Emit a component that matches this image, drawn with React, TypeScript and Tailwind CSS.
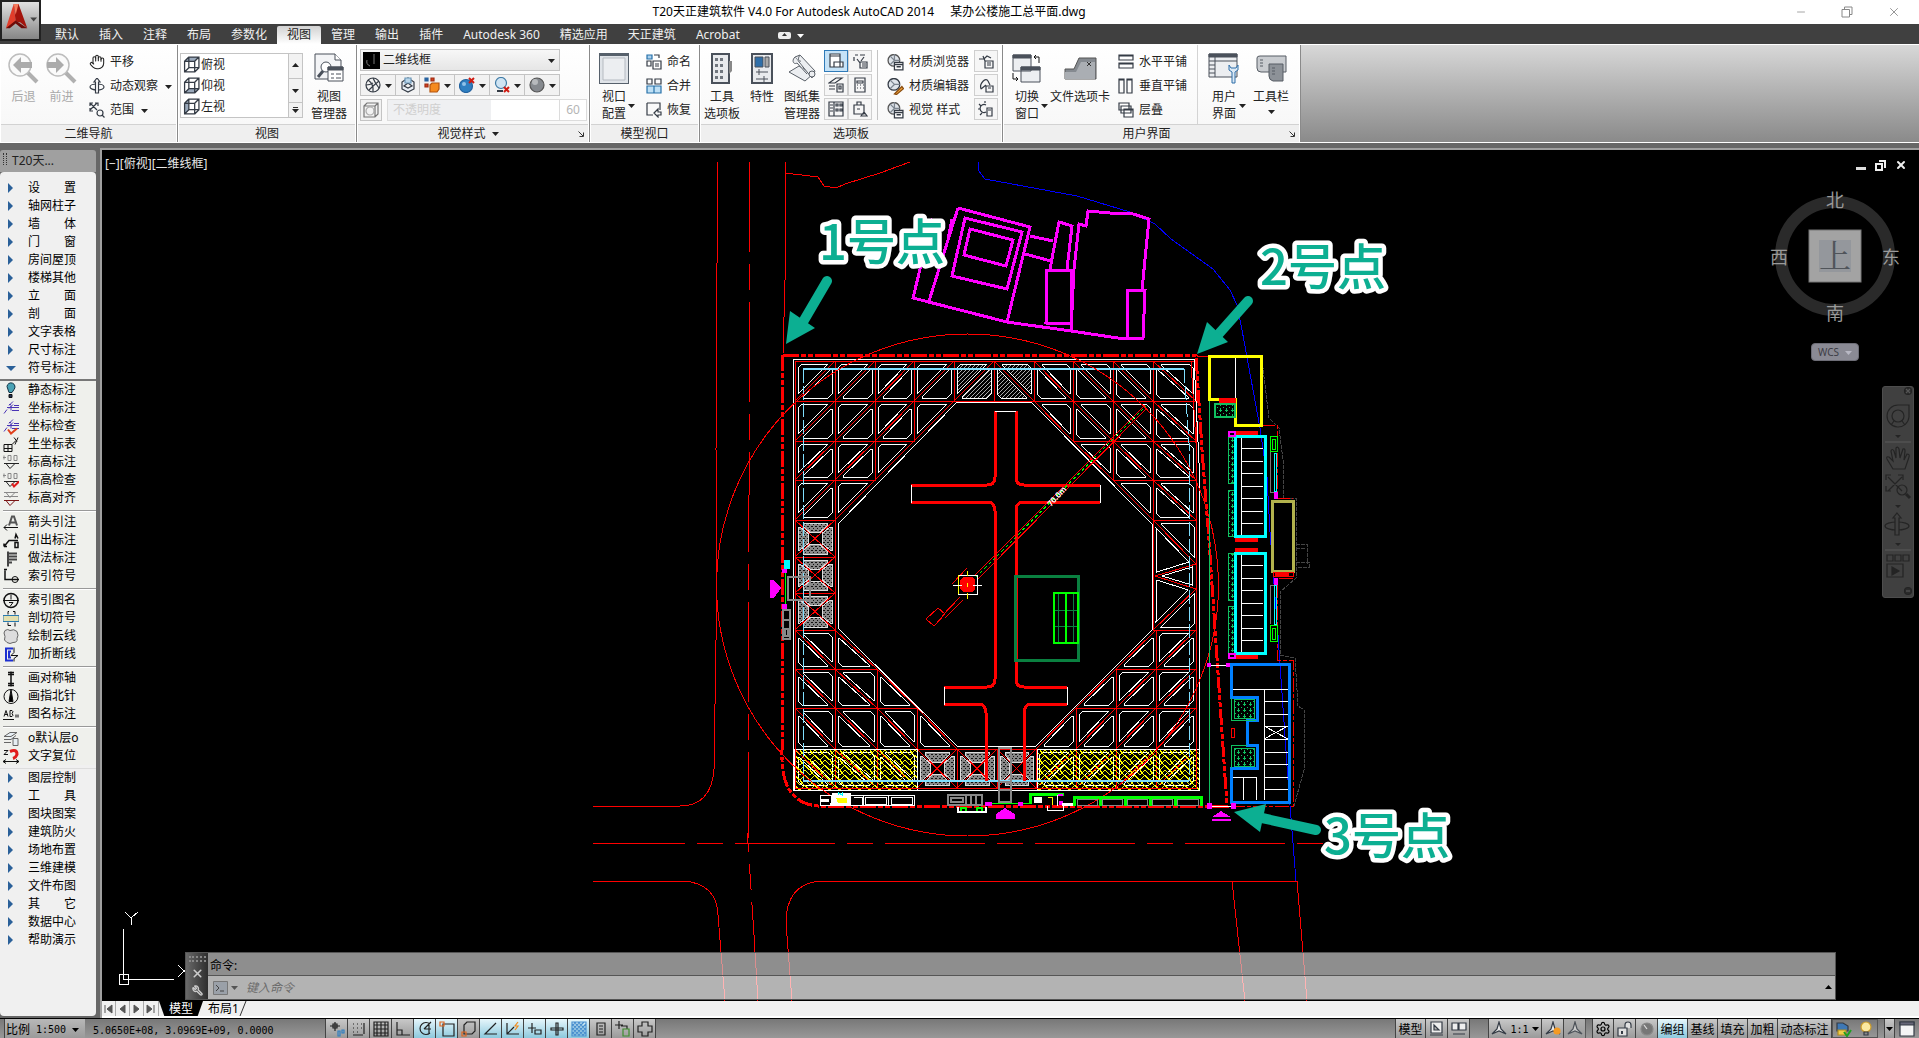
import type { ReactNode } from 'react';
import { Hand, Minus, Settings, Wrench, X } from 'lucide-react';

const menuTabs = ['默认', '插入', '注释', '布局', '参数化', '视图', '管理', '输出', '插件', 'Autodesk 360', '精选应用', '天正建筑', 'Acrobat'];

export default function App() {
  return (
    <div className="flex h-screen min-h-[700px] flex-col overflow-hidden bg-[#676767] font-['Noto_Sans','Noto_Sans_CJK_SC',sans-serif] text-[12px] text-[#222]">
      <Header />
      <Ribbon />
      <div className="flex min-h-0 flex-1 pt-[5px]">
        <Sidebar />
        <main className="flex min-w-0 flex-1 flex-col border-l-2 border-t-2 border-[#a0a0a0]">
          <Viewport />
          <LayoutTabs />
        </main>
      </div>
      <StatusBar />
    </div>
  );
}

function Header() {
  return (
    <header className="flex h-[44px] shrink-0 bg-[#404040]">
      <button type="button" aria-label="应用程序菜单" className="flex h-[41px] w-[41px] items-center justify-center border-2 border-[#222] bg-gradient-to-b from-[#e2e2e2] to-[#868686]">
        <svg viewBox="0 0 38 38" className="h-[37px] w-[37px]">
          <path d="M12 2 L4 27 L9 25 L14 20 Z" fill="#e23d2a" />
          <path d="M12 2 L14 20 L19 21 L26 27 L17 2 Z" fill="#a3140c" />
          <path d="M4 27 L14 19 L26 27 L20 27 L14 22 L8 27 Z" fill="#6d0b08" />
          <path d="M12 2 L17 2 L14 13 Z" fill="#f47a5c" />
          <path d="M29 16 H36 L32.500 20 Z" fill="#444" />
        </svg>
      </button>
      <div className="flex min-w-0 flex-1 flex-col">
        <div className="flex h-[24px] items-center bg-white text-black">
          <div className="flex-[3]" />
          <h1 className="flex gap-[16px] whitespace-nowrap text-[12px]">
            <span>T20天正建筑软件 V4.0 For Autodesk AutoCAD 2014</span>
            <span>某办公楼施工总平面.dwg</span>
          </h1>
          <div className="flex flex-[4] items-center justify-end gap-[34px] pr-[18px] text-[#888]">
            <button type="button" aria-label="最小化"><Minus size={12} strokeWidth={1.5} /></button>
            <button type="button" aria-label="还原">
              <svg width="12" height="12" viewBox="0 0 12 12" fill="none" stroke="currentColor"><path d="M1 3.500 H8.500 V11 H1 Z M3.500 3 V1 H11 V8.500 H9" /></svg>
            </button>
            <button type="button" aria-label="关闭"><X size={14} strokeWidth={1.5} /></button>
          </div>
        </div>
        <nav className="flex h-[20px] items-end pl-[4px] text-[#f0f0f0]">
          {menuTabs.map((tab) => (
            <button
              key={tab}
              type="button"
              className={`h-[18px] whitespace-nowrap px-[10px] text-[12px] leading-[18px] ${
                tab === '视图' ? 'rounded-t-[2px] bg-gradient-to-b from-[#d2d2d2] to-white text-[#222]' : ''
              }`}
            >
              {tab}
            </button>
          ))}
          <button type="button" aria-label="最小化功能区" className="ml-[28px] flex h-[18px] items-center gap-[6px]">
            <span className="flex h-[7px] w-[13px] items-center justify-center rounded-[2px] bg-[#eee]">
              <svg width="5" height="4" viewBox="0 0 5 4"><path d="M0 3 L2.500 0 L5 3 Z" fill="#333" /></svg>
            </span>
            <Caret className="text-white" />
          </button>
        </nav>
      </div>
    </header>
  );
}

function Caret({ className = '' }: { className?: string }) {
  return (
    <svg width="7" height="5" viewBox="0 0 7 5" className={`shrink-0 ${className}`}>
      <path d="M0 1 H7 L3.500 5 Z" fill="currentColor" />
    </svg>
  );
}

interface PanelProps {
  title: string;
  className: string;
  hasArrow?: boolean;
  hasLauncher?: boolean;
  children: ReactNode;
}

function Panel({ title, className, hasArrow, hasLauncher, children }: PanelProps) {
  return (
    <section className={`flex shrink-0 flex-col border-r border-[#8a8a8a] bg-white px-px ${className}`}>
      <div className="flex min-h-0 flex-1 bg-gradient-to-b from-white to-[#f8f8f8]">{children}</div>
      <div className={`relative flex h-[18px] items-center justify-center gap-[6px] border-t border-[#d2d2d2] bg-[#efefef] ${hasLauncher ? 'pr-[10px]' : ''}`}>
        <h2>{title}</h2>
        {hasArrow ? <Caret /> : null}
        {hasLauncher ? (
          <svg width="6" height="6" viewBox="0 0 6 6" className="absolute right-[4px] top-[6px]" stroke="#333" fill="none"><path d="M0.500 0.500 L5 5 M5.500 1.500 V5.500 H1.500" /></svg>
        ) : null}
      </div>
    </section>
  );
}

// Large icon above a one- or two-line caption
function BigButton({ icon, lines, arrow, className = '' }: { icon: ReactNode; lines: string[]; arrow?: 'side' | 'below'; className?: string }) {
  return (
    <button type="button" className={`relative flex shrink-0 flex-col items-center pt-[7px] leading-[17px] ${className}`}>
      <span className="mb-[4px] flex h-[32px] items-center justify-center">{icon}</span>
      {lines.map((line) => (
        <span key={line} className="whitespace-nowrap">{line}</span>
      ))}
      {arrow === 'side' ? <Caret className="absolute bottom-[16px] right-[-6px]" /> : null}
      {arrow === 'below' ? <Caret className="mt-[4px]" /> : null}
    </button>
  );
}

function SmallButton({ icon, label, hasArrow }: { icon: ReactNode; label: string; hasArrow?: boolean }) {
  return (
    <button type="button" className="flex h-[24px] items-center gap-[5px] whitespace-nowrap">
      {icon}
      <span>{label}</span>
      {hasArrow ? <Caret className="ml-[2px]" /> : null}
    </button>
  );
}

function Glyph({ size = 16, children }: { size?: number; children: ReactNode }) {
  return (
    <svg width={size} height={size} viewBox="0 0 16 16" fill="none" stroke="#343b45" strokeWidth="1.200" className="shrink-0">
      {children}
    </svg>
  );
}

function NavArrowIcon({ flip }: { flip?: boolean }) {
  return (
    <svg width="31" height="31" viewBox="0 0 31 31" fill="none">
      <circle cx="12" cy="12" r="11" stroke="#bdbdbd" strokeWidth="1.500" fill="#fafafa" />
      <path d="M20 20 L29 29" stroke="#b0b0b0" strokeWidth="4" />
      <path d={flip ? 'M18 12 L10 4 V9 H1 V15 H10 V20 Z' : 'M5 12 L13 4 V9 H24 V15 H13 V20 Z'} fill="#ababab" />
    </svg>
  );
}

function CubeIcon({ face }: { face: string }) {
  return (
    <Glyph size={17}>
      <path d={face} fill="#9aa9bb" stroke="none" />
      <path d="M1.500 5 H11 V15 H1.500 Z M5.500 1 H15 V11 H5.500 Z M1.500 5 L5.500 1 M11 5 L15 1 M11 15 L15 11 M1.500 15 L5.500 11" />
    </Glyph>
  );
}

const paletteGlyphs = [
  'M2 1 H12 V14 H2 Z M2 3 H12 M6 9 H15 V14 H6 Z',
  'M3 2 H6 M8 2 H13 M2 4 V8 M5 6 L8 10 M12 4 L9 8 M8 9 H15 V15 H8 Z M10 11 H14 M10 13 H14',
  'M1 6 L8 1 H14 L7 6 Z M1 9 H7 M1 12 H7 M9 7 H15 V15 H9 Z M11 9 H13 V12 H11 Z',
  'M3 1 H13 V15 H3 Z M5 4 H11 V6 H5 Z M5 8 H6 M8 8 H9 M11 8 H12 M5 11 H6 M8 11 H9 M11 11 H12',
  'M1 1 H15 V15 H1 Z M6 1 V15 M2 4 H5 M2 7 H5 M2 10 H5 M8 3 H10 V5 H8 Z M12 3 H14 V5 H12 Z M8 8 H10 V10 H8 Z M12 8 H14 V10 H12 Z',
  'M2 4 H12 V13 H2 Z M5 4 V1 H9 V4 M5 8 H8 M12 8 V11 M9 15 L12 11 L15 15 Z',
];

const materialGlyphs = ['M1 6 H6 L9 3 L13 5 M5 3 L7 8 M7 8 H15 V15 H7 Z M9 10 H13 M9 12 H13', 'M3 12 C1 6 8 0 10 4 L12 8 M3 12 L8 8 M8 9 H15 V15 H8 Z M10 11 H13', 'M8 4 A4 4 0 1 0 8 11 M7 0 V2 M1 3 L3 5 M0 8 H2 M2 14 L4 12 M9 7 H14 V15 H9 Z M10 9 H13'];

function SphereMini({ extra }: { extra: string }) {
  return (
    <Glyph size={17}>
      <circle cx="6.500" cy="6" r="5.500" fill="#dfe4ea" stroke="#555" />
      <path d="M3 2 L7 6 L3 10 M7 6 H12 M7 0 L7 6" stroke="#7c858f" />
      <path d={extra} fill="#fff" />
    </Glyph>
  );
}

function Ribbon() {
  return (
    <div className="flex h-[99px] shrink-0 border-y border-white bg-gradient-to-b from-[#d8d8d8] to-[#8a8a8a]">
      <Panel title="二维导航" className="w-[178px]">
        <div className="flex gap-[7px] pl-[7px] text-[#a9a9a9]">
          <BigButton icon={<NavArrowIcon />} lines={['后退']} />
          <BigButton icon={<NavArrowIcon flip />} lines={['前进']} />
        </div>
        <div className="ml-[12px] flex flex-col pt-[5px]">
          <SmallButton icon={<Hand size={16} strokeWidth={1.6} />} label="平移" />
          <SmallButton
            icon={<Glyph><ellipse cx="8" cy="9" rx="7" ry="3" /><path d="M8 0 L11 4 H9.500 V15 H6.500 V4 H5 Z" fill="#fff" /></Glyph>}
            label="动态观察"
            hasArrow
          />
          <SmallButton icon={<Glyph><path d="M1 1 L8 8 M8 1 L1 8 M1 4 V1 H4 M6 1 H9 V4 M1 6 V9 H4 M13 13 L15.500 15.500" /><circle cx="11" cy="11" r="3" /></Glyph>} label="范围" hasArrow />
        </div>
      </Panel>

      <Panel title="视图" className="w-[179px]">
        <div className="ml-px mt-[8px] flex h-[65px] w-[123px] border border-[#c4c4c4] bg-white">
          <ul className="flex flex-1 flex-col">
            {[
              ['俯视', 'M1.500 5 L5.500 1 H15 L11 5 Z'],
              ['仰视', 'M1.500 15 L5.500 11 H15 L11 15 Z'],
              ['左视', 'M1.500 5 L5.500 1 V11 L1.500 15 Z'],
            ].map(([label, face]) => (
              <li key={label} className="flex h-[21px] items-center gap-px pl-[2px]">
                <CubeIcon face={face} />
                {label}
              </li>
            ))}
          </ul>
          <div className="flex w-[14px] flex-col divide-y divide-[#c4c4c4] border-l border-[#c4c4c4] bg-[#f2f2f2]">
            <button type="button" aria-label="上一行" className="flex flex-1 items-center justify-center"><Caret className="rotate-180" /></button>
            <button type="button" aria-label="下一行" className="flex flex-1 items-center justify-center"><Caret /></button>
            <button type="button" aria-label="展开" className="flex h-[14px] flex-col items-center justify-center"><span className="h-px w-[5px] bg-[#333]" /><Caret /></button>
          </div>
        </div>
        <BigButton
          className="ml-[8px]"
          icon={
            <svg width="30" height="30" viewBox="0 0 30 30" fill="#fff" stroke="#4a515b">
              <path d="M1 1 H21 L27 7 V26 H1 Z" fill="#f3f4f6" />
              <path d="M21 1 V7 H27" />
              <circle cx="12" cy="14" r="5" />
              <path d="M9 18 L4 24" strokeWidth="3" />
              <path d="M14 14 H29 V28 H14 Z" />
              <path d="M14 14 H29 V17 H14 Z" fill="#4a515b" />
              <path d="M17 21 H20 M22 21 H27 M17 25 H20 M22 25 H27" />
            </svg>
          }
          lines={['视图', '管理器']}
        />
      </Panel>

      <Panel title="视觉样式" className="w-[233px]" hasArrow hasLauncher>
        <div className="flex flex-col gap-[3px] pl-[2px] pt-[4px]">
          <div className="flex h-[22px] w-[200px] items-center border border-[#c4c4c4] bg-gradient-to-b from-[#f7f7f7] to-[#e6e6e6] pl-[2px]">
            <svg width="17" height="17" viewBox="0 0 17 17"><path d="M0 0 H17 V17 H0 Z" /><path d="M11 2 V12 M4 8 A5 5 0 0 0 7 14" stroke="#777" fill="none" /></svg>
            <select aria-label="视觉样式" className="h-full flex-1 appearance-none bg-transparent pl-[3px] outline-none">
              <option>二维线框</option>
            </select>
            <Caret className="mr-[4px]" />
          </div>
          <div className="flex h-[22px] w-[200px] items-center justify-between divide-x divide-[#c4c4c4] border border-[#c4c4c4] bg-[#f2f2f2]">
            <button type="button" aria-label="线框" className="flex h-full flex-1 items-center justify-center gap-[4px]"><Glyph><circle cx="8" cy="8" r="7" /><path d="M3 3 Q9 7 8 15 M4 13 Q9 8 14 4 M8 1 Q10 6 14 11 M1 8 Q5 8 8 6" /></Glyph><Caret /></button>
            <button type="button" aria-label="隐藏" className="flex h-full w-[24px] items-center justify-center"><Glyph><path d="M8 1 L14 5 V12 L8 15 L2 12 V5 Z M4 9 L8 11 L12 9 L8 6 Z" fill="#e8eef5" /><path d="M5 1 H11 V6 H5 Z" fill="#b9d6ea" stroke="#6d97b8" /></Glyph></button>
            <button type="button" aria-label="颜色" className="flex h-full flex-1 items-center justify-center gap-[4px]"><Glyph><path d="M1 1 H4 V4 H1 Z" fill="#2863a0" stroke="#2863a0" /><path d="M7 1 H10 V4 H7 Z M1 7 H4 V10 H1 Z" fill="#d2401e" stroke="#a02c12" /><path d="M6 8 L8 6 H15 V12 L13 15 H6 Z" fill="#f58a1f" stroke="#b45510" /></Glyph><Caret /></button>
            <button type="button" aria-label="阴影关" className="flex h-full flex-1 items-center justify-center gap-[4px]"><Glyph><circle cx="7" cy="9" r="6.500" fill="#2f7fc1" stroke="#2363a0" /><circle cx="5" cy="7" r="2" fill="#8fc1e8" stroke="none" /><path d="M10 1 L15 6 M15 1 L10 6" stroke="#cf1b12" strokeWidth="2" /></Glyph><Caret /></button>
            <button type="button" aria-label="光源" className="flex h-full flex-1 items-center justify-center gap-[4px]"><Glyph><circle cx="7" cy="6" r="5.500" fill="#cfe4f3" stroke="#3f7ba6" /><path d="M3 14 H9" strokeWidth="2" /><path d="M10 10 L15 15 M15 10 L10 15" stroke="#cf1b12" strokeWidth="2" /></Glyph><Caret /></button>
            <button type="button" aria-label="材质" className="flex h-full flex-1 items-center justify-center gap-[4px]"><Glyph><circle cx="8" cy="8" r="7" fill="#85898e" stroke="#555" /><circle cx="6" cy="5" r="3" fill="#b7babd" stroke="none" /></Glyph><Caret /></button>
          </div>
          <div className="flex h-[22px] gap-[5px]">
            <button type="button" aria-label="X 射线" className="flex w-[22px] items-center justify-center border border-[#c4c4c4] bg-[#f2f2f2]"><Glyph><path d="M1 4 L4 1 H15 V12 L12 15 H1 Z M1 4 H12 V15 M12 4 L15 1" stroke="#777" /><circle cx="7" cy="9" r="4" stroke="#aaa" /></Glyph></button>
            <div className="flex w-[200px] border border-[#dcdcdc] bg-white text-[#b5b5b5]">
              <div className="relative w-[172px] border-r border-[#dcdcdc]">
                <div className="absolute inset-y-0 left-0 flex w-[60%] items-center bg-[#eff0f2] pl-[5px] text-[#cfcfcf]">不透明度</div>
                <input type="range" aria-label="不透明度" defaultValue={60} disabled className="absolute inset-0 h-full w-full appearance-none bg-transparent opacity-0" />
              </div>
              <input aria-label="不透明度数值" defaultValue="60" disabled className="w-[26px] bg-transparent text-center" />
            </div>
          </div>
        </div>
      </Panel>

      <Panel title="模型视口" className="w-[110px]">
        <BigButton
          className="ml-[8px]"
          icon={<svg width="30" height="31" viewBox="0 0 30 31"><path d="M0 0 H30 V31 H0 Z" fill="#56606b" /><path d="M1 3 H29 V30 H1 Z" fill="#dfe3e8" /><path d="M4 5 H26 V27 H4 Z" fill="#eceef1" stroke="#b5bac1" /></svg>}
          lines={['视口', '配置']}
          arrow="side"
        />
        <div className="ml-[17px] flex flex-col pt-[5px]">
          <SmallButton icon={<Glyph><path d="M1 1 H6 V5 H1 Z" fill="#a9d0ee" stroke="#2670a8" /><path d="M8 1 H13 V4 M1 7 H5 V12 H1 Z M7 7 H15 V15 H7 Z M9 10 H13 M9 12 H13" /></Glyph>} label="命名" />
          <SmallButton icon={<Glyph><path d="M1 1 H6 V6 H1 Z M9 1 H15 V6 H9 Z" /><path d="M1 8 H15 V15 H1 Z" fill="#bfe0f5" stroke="#2670a8" /><path d="M8 8 V15" stroke="#2670a8" /></Glyph>} label="合并" />
          <SmallButton icon={<Glyph><path d="M1 1 H14 V8 M1 1 V13 H7 M8 11 L12 7 V10 H15 V13 H12 V15 Z" /></Glyph>} label="恢复" />
        </div>
      </Panel>

      <Panel title="选项板" className="w-[303px]">
        <BigButton className="ml-[3px]" icon={<svg width="22" height="31" viewBox="0 0 22 31"><path d="M1 1 H18 V30 H1 Z" fill="#e8eaed" stroke="#4a515b" strokeWidth="2" /><path d="M18 8 H21 V18 L18 21 Z" fill="#888" /><path d="M4 5 H7 V8 H4 Z M9 5 H12 V8 H9 Z M4 11 H7 V14 H4 Z M9 11 H12 V14 H9 Z M4 17 H7 V20 H4 Z M9 17 H12 V20 H9 Z M4 23 H7 V26 H4 Z M9 23 H12 V26 H9 Z" fill="#70767e" /></svg>} lines={['工具', '选项板']} />
        <BigButton className="ml-[10px]" icon={<svg width="22" height="31" viewBox="0 0 22 31" stroke="#4a515b"><path d="M1 1 H21 V30 H1 Z" fill="#e8eaed" strokeWidth="2" /><path d="M4 4 H12 V14 H4 Z" fill="#2f6ea8" /><path d="M14 4 H18 V14 H14 Z" fill="#aaa" /><path d="M5 19 H17 M8 16 V22 M5 26 H17 M13 23 V29" /></svg>} lines={['特性']} />
        <BigButton className="ml-[10px]" icon={<svg width="30" height="28" viewBox="0 0 30 28" stroke="#5a6068" fill="#eceef1"><path d="M2 18 L12 12 L26 20 L18 27 Z" /><path d="M8 3 L13 1 L28 17 L25 24 Z" /><path d="M8 3 C4 7 7 11 10 9 L20 20 M13 1 C10 5 12 8 14 7" /><circle cx="25" cy="20" r="3" /></svg>} lines={['图纸集', '管理器']} />
        <div className="ml-[4px] mt-[5px] grid h-[70px] grid-cols-2 gap-y-[2px] border-r border-[#c4c4c4] pr-[5px]">
          {paletteGlyphs.map((d, index) => (
            <button
              key={d}
              type="button"
              aria-label={`选项板 ${index + 1}`}
              className={`flex h-[22px] w-[24px] items-center justify-center border ${index === 0 ? 'border-[#2f7ab8] bg-[#c5e2f7]' : 'border-[#cfcfcf] bg-[#f6f6f6]'}`}
            >
              <Glyph><path d={d} fill={index === 0 ? '#fff' : 'none'} /></Glyph>
            </button>
          ))}
        </div>
        <div className="ml-[9px] flex flex-col pt-[5px]">
          <SmallButton icon={<SphereMini extra="M7 8 H15 V15 H7 Z M7 10 H15 M9 12 H13" />} label="材质浏览器" />
          <SmallButton icon={<Glyph size={17}><circle cx="6.500" cy="6" r="5.500" fill="#dfe4ea" /><path d="M3 2 L7 6 L3 10 M7 6 H12" stroke="#7c858f" /><path d="M7 15 L14 8 L15.500 10 L9 15.500 Z" fill="#f3a63b" stroke="#8a4d10" /></Glyph>} label="材质编辑器" />
          <SmallButton icon={<SphereMini extra="M7 8 H15 V15 H7 Z M7 10 H15 M9 12 H13" />} label="视觉 样式" />
        </div>
        <div className="ml-[5px] mt-[5px] flex flex-col gap-[2px]">
          {materialGlyphs.map((d, index) => (
            <button key={d} type="button" aria-label={`渲染选项板 ${index + 1}`} className="flex h-[22px] w-[24px] items-center justify-center border border-[#cfcfcf] bg-[#f6f6f6]">
              <Glyph><path d={d} /></Glyph>
            </button>
          ))}
        </div>
      </Panel>

      <Panel title="用户界面" className="w-[298px]" hasLauncher>
        <BigButton
          className="ml-[8px]"
          icon={<svg width="30" height="30" viewBox="0 0 30 30" stroke="#4a515b" fill="#eceef1"><path d="M1 2 H19 V18 H1 Z M9 14 H28 V29 H9 Z" /><path d="M1 2 H19 V5 H1 Z M9 14 H28 V17 H9 Z" fill="#4a515b" /><path d="M22 4 H27 V10 M24 2 L22 4 L24 6 M1 20 V26 H6 M4 24 L6 26 L4 28" fill="none" stroke="#111" /></svg>}
          lines={['切换', '窗口']}
          arrow="side"
        />
        <BigButton className="ml-[8px]" icon={<svg width="33" height="23" viewBox="0 0 33 23"><path d="M1 12 H10 L15 1 H32 V22 H1 Z" fill="#858a90" stroke="#555" /><path d="M1 15 H12 L17 5 H31 V22 H1 Z" fill="#aaaeb3" /><path d="M23 5 L27 9 M27 5 L23 9" stroke="#333" /></svg>} lines={['文件选项卡']} />
        <div className="ml-[8px] flex w-[80px] flex-col border-r border-[#d4d4d4] pt-[5px]">
          <SmallButton icon={<Glyph><path d="M1 1 H15 V6 H1 Z M1 9 H15 V14 H1 Z M1 2 H15 M1 10 H15" /></Glyph>} label="水平平铺" />
          <SmallButton icon={<Glyph><path d="M1 1 H6 V15 H1 Z M9 1 H14 V15 H9 Z M1 2 H6 M9 2 H14" /></Glyph>} label="垂直平铺" />
          <SmallButton icon={<Glyph><path d="M1 1 H11 V8 H1 Z M3 4 H13 V11 H3 Z M6 7 H15 V15 H6 Z M6 8 H15" fill="#fff" /></Glyph>} label="层叠" />
        </div>
        <BigButton
          className="ml-[10px]"
          icon={<svg width="32" height="31" viewBox="0 0 32 31" stroke="#4a515b" fill="#eceef1"><path d="M1 1 H29 V24 H1 Z" /><path d="M1 1 H29 V4 H1 Z" fill="#4a515b" /><path d="M1 8 H29 M7 4 V24 M1 12 H7 M1 16 H7 M1 20 H7" /><path d="M21 12 V17 L24 19 V30 H27 V19 L30 17 V12 L28 15 H23 Z" fill="#dbe9f6" stroke="#2f6ea8" /></svg>}
          lines={['用户', '界面']}
          arrow="side"
        />
        <BigButton className="ml-[13px]" icon={<svg width="32" height="28" viewBox="0 0 32 28" stroke="#565c64"><path d="M2 4 Q2 2 5 2 H31 V18 H6 Q2 18 2 14 Z" fill="#c9ccd0" /><path d="M14 10 H28 V27 H18 Q14 26 14 22 Z" fill="#8d9298" /><path d="M5 6 H8 M5 9 H8 M5 12 H8 M17 14 H20 M17 17 H20 M17 20 H20" /></svg>} lines={['工具栏']} arrow="below" />
      </Panel>
    </div>
  );
}

const menuTop = ['设　　置', '轴网柱子', '墙　　体', '门　　窗', '房间屋顶', '楼梯其他', '立　　面', '剖　　面', '文字表格', '尺寸标注', '符号标注'];
const menuBottom = ['图层控制', '工　　具', '图块图案', '建筑防火', '场地布置', '三维建模', '文件布图', '其　　它', '数据中心', '帮助演示'];

interface Tool {
  label: string;
  icon: ReactNode;
}

const coordLines = <path d="M1 13 L4 9 M6 8 L10 4 M6 4 H8 M10 1 L6 5 M8 5 V10 M11 5 H16 M4 7 H16 M9 10 H16" stroke="#4a35b5" />;

const toolGroups: Tool[][] = [
  [
    { label: '静态标注', icon: <><path d="M4 4 A4 4 0 1 1 11 7 L9 10 H6 Z" fill="#4aa3b5" stroke="#134" /><path d="M6 12 H9 V15 H6 Z" fill="#235" /></> },
    { label: '坐标标注', icon: coordLines },
    { label: '坐标检查', icon: <>{coordLines}<path d="M5 11 L8 15 L14 10" stroke="#e0401c" strokeWidth="2" /></> },
    { label: '生坐标表', icon: <path d="M1 8 H9 V15 H1 Z M5 8 V15 M1 12 H9 M9 8 L13 4 M11 1 L14 5 M15 1 L12 8" /> },
    { label: '标高标注', icon: <><path d="M0 3 H3 M1 1 V5 M5 1 H8 V6 H5 Z M11 1 H14 V6 H11 Z" stroke="#888" /><path d="M1 9 H16 M3 9 L7 14 L12 9" stroke="#222" /></> },
    { label: '标高检查', icon: <><path d="M0 3 H3 M1 1 V5 M5 1 H8 V6 H5 Z M11 1 H14 V6 H11 Z" stroke="#888" /><path d="M1 9 H16 M3 9 L7 14 L12 9" stroke="#222" /><path d="M9 11 L11 14 L16 9" stroke="#e01c1c" strokeWidth="2" /></> },
    { label: '标高对齐', icon: <><path d="M1 2 H15 M3 2 L7 7 L12 2 M1 6 H15" stroke="#888" /><path d="M1 10 H16 M3 10 L7 15 L12 10" stroke="#7a1414" /></> },
  ],
  [
    { label: '箭头引注', icon: <><path d="M6 11 L9 2 H11 L14 11 M7 8 H13" stroke="#555" strokeWidth="2" /><path d="M1 13 H15 M1 13 L4 10 M1 13 L4 16" /></> },
    { label: '引出标注', icon: <path d="M1 14 L6 8 H15 M1 14 V11 M1 14 H4 M12 6 L13 2 L15 6 M12 10 H15 V15 H12 Z" strokeWidth="1.500" /> },
    { label: '做法标注', icon: <path d="M5 16 V1 M5 3 H14 M5 6 H14 M5 9 H14 M5 12 H9" strokeWidth="2" stroke="#444" /> },
    { label: '索引符号', icon: <><path d="M1 1 H4 M2 2 V11 H9 M9 11 H16" strokeWidth="1.500" /><circle cx="12" cy="11" r="3" /></> },
  ],
  [
    { label: '索引图名', icon: <><circle cx="8" cy="8" r="7" strokeWidth="1.500" /><path d="M0 8 H16 M8 2 V7 M6 10 H10 L7 14" /></> },
    { label: '剖切符号', icon: <><path d="M6 1 H5 V4 M10 1 H12 V4 M5 12 V15 H8 M12 12 V16" /><path d="M0 5 H16 V11 H0 Z" fill="#e4e0ae" stroke="#2a7bb0" /></> },
    { label: '绘制云线', icon: <path d="M2 2 Q5 0 7 2 Q11 0 14 3 Q16 7 14 10 Q15 14 10 14 Q7 16 4 14 Q0 12 2 8 Q0 4 2 2 Z" fill="#ddd" stroke="#666" /> },
    { label: '加折断线', icon: <><path d="M10 2 H3 V14 H10 M8 5 H6 V11 H8" stroke="#1c2fd0" strokeWidth="2" /><path d="M11 1 V6 L8 9 H15 L11 12 V15" /></> },
  ],
  [
    { label: '画对称轴', icon: <path d="M8 1 V16 M5 2 H11 M5 4 H11 M5 13 H11 M5 15 H11" strokeWidth="1.500" /> },
    { label: '画指北针', icon: <><circle cx="8" cy="8" r="7" /><path d="M8 1 L10 13 H6 Z" fill="#000" /></> },
    { label: '图名标注', icon: <><path d="M1 10 L3 4 L5 10 M2 8 H5 M7 4 V10 H9 Q11 9 9 7 Q11 5 9 4 Z M0 13 H11" /><path d="M12 8 H16 V11 H12 Z" fill="#777" stroke="none" /></> },
  ],
  [
    { label: 'o默认层o', icon: <path d="M1 6 L7 2 H14 L8 6 Z M1 9 H8 L13 5 M1 12 H8 M10 8 H15 V15 H10 Z" fill="#e6eef3" stroke="#666" /> },
    { label: '文字复位', icon: <><path d="M7 3 Q14 0 14 6 Q13 9 10 10" stroke="#e01c1c" strokeWidth="3" /><path d="M1 2 H5 L1 6 H5 M0 13 H16 M3 11 L0 13 L3 15 M13 11 L16 13 L13 15" /></> },
  ],
];

function MenuRow({ label }: { label: string }) {
  const isOpen = label === '符号标注';

  return (
    <button type="button" className="flex h-[18px] w-full items-center whitespace-nowrap pl-[5px] text-black">
      <svg width="12" height="10" viewBox="0 0 12 10" className="mr-[11px]" fill="#2a6099">
        <path d={isOpen ? 'M1 3 H11 L6 8 Z' : 'M3 0 L8 5 L3 10 Z'} />
      </svg>
      {label}
    </button>
  );
}

function Sidebar() {
  return (
    <aside className="flex w-[100px] shrink-0 flex-col pb-[2px] pr-[4px] pt-[2px]">
      <div className="flex h-[22px] items-center gap-[5px] rounded-t-[3px] bg-[#a0a0a0] pl-[3px]">
        <span className="mb-[4px] h-[12px] w-[4px] border-x border-dotted border-[#333]" />
        T20天...
      </div>
      <div className="min-h-0 flex-1 overflow-hidden rounded-[4px] bg-[#f0f0f0] pt-[7px]">
        {menuTop.map((label) => <MenuRow key={label} label={label} />)}
        <div className="h-[4px] border-b-2 border-[#777]" />
        <div className="bg-[#eff0ec]">
          {toolGroups.map((group, index) => (
            <div key={group[0].label}>
              {index > 0 ? <div className="ml-[3px] h-[6px] pt-[3px]"><div className="h-[2px] border-t border-[#999] bg-white" /></div> : null}
              {group.map((tool) => (
                <button key={tool.label} type="button" className="flex h-[18px] w-full items-center gap-[9px] whitespace-nowrap pl-[3px] text-black">
                  <svg width="16" height="17" viewBox="0 0 16 16" fill="none" stroke="#111">{tool.icon}</svg>
                  {tool.label}
                </button>
              ))}
            </div>
          ))}
        </div>
        <div className="h-[4px] border-b border-[#ddd]" />
        {menuBottom.map((label) => <MenuRow key={label} label={label} />)}
      </div>
    </aside>
  );
}

function Viewport() {
  return (
    <div className="relative min-h-0 flex-1 overflow-hidden bg-black">
      <SitePlan />
      <div className="absolute left-[3px] top-[5px] flex text-[12px] text-[#e8e8e8]">
        <button type="button">[−]</button>
        <button type="button">[俯视]</button>
        <button type="button">[二维线框]</button>
      </div>
      <WindowControls />
      <ViewCube />
      <NavigationBar />
      <CommandLine />
    </div>
  );
}

function WindowControls() {
  return (
    <div className="absolute right-[12px] top-[9px] flex items-center gap-[9px] text-[#eee]">
      <button type="button" aria-label="最小化视口" className="mt-[7px] h-[3px] w-[10px] bg-[#ddd]" />
      <button type="button" aria-label="还原视口">
        <svg width="11" height="11" viewBox="0 0 11 11" fill="none" stroke="#eee" strokeWidth="2"><path d="M1 4 H7 V10 H1 Z M4 1 H10 V8" /></svg>
      </button>
      <button type="button" aria-label="关闭视口"><X size={12} strokeWidth={4} /></button>
    </div>
  );
}

function ViewCube() {
  return (
    <div className="absolute right-[16px] top-[33px] flex w-[136px] flex-col items-center">
      <svg viewBox="-4 -8 136 148" className="h-[148px] w-[136px] font-['Noto_Sans_CJK_SC',sans-serif]" textAnchor="middle" fontSize="18" fill="#9a9a9a">
        <circle cx="64" cy="65" r="54" fill="none" stroke="#2a2a2a" strokeWidth="12" />
        <rect x="38" y="39" width="52" height="52" fill="#a3a3a3" stroke="#777" />
        <rect x="48" y="49" width="32" height="32" fill="#94979c" />
        <text x="64" y="77" fontSize="32" fill="#50545a" className="font-['Noto_Serif_CJK_SC','Noto_Sans_CJK_SC',serif]">上</text>
        <text x="64" y="16">北</text>
        <text x="64" y="129">南</text>
        <text x="8" y="73">西</text>
        <text x="120" y="73">东</text>
      </svg>
      <button type="button" className="mt-[12px] flex h-[18px] w-[48px] items-center justify-center gap-[6px] rounded-[4px] border border-[#6d6d76] bg-[#8a8a94] text-[10px] text-[#3c3c44]">
        WCS
        <Caret className="text-[#b8b8c4]" />
      </button>
    </div>
  );
}

function NavigationBar() {
  return (
    <div className="absolute right-[5px] top-[236px] flex h-[212px] w-[32px] flex-col items-center rounded-[3px] border border-[#4d4d4d] bg-[#404040] text-[#222]">
      <svg viewBox="0 0 30 210" className="h-[210px] w-[30px]" fill="none" stroke="#242424" strokeWidth="1.200">
        <circle cx="25" cy="4" r="3.500" fill="#2b2b2b" />
        <path d="M23 2 L27 6 M27 2 L23 6" stroke="#555" />
        <path d="M15 18 H26 V30 A11 11 0 1 1 15 18" />
        <circle cx="15" cy="29" r="6" />
        <path d="M11 34 L8 38 M19 34 L22 38" />
        <path d="M12 48 H18 L15 51 Z M12 118 H18 L15 121 Z M12 156 H18 L15 159 Z" fill="#242424" stroke="none" />
        <path d="M2 55 H28 M2 163 H28" stroke="#5a5a5a" />
        <path d="M10 82 L4 72 Q3 69 6 70 L10 74 L8 64 Q9 61 11 64 L13 71 V61 Q15 59 16 62 L17 71 L20 62 Q22 61 22 64 L21 73 L24 67 Q27 67 26 70 L22 82 Z" />
        <path d="M5 90 L19 104 M19 90 L5 104 M3 93 V88 H8 M15 88 H20 V93 M3 99 V104 H8" />
        <circle cx="19" cy="103" r="5" />
        <path d="M23 107 L27 111" strokeWidth="3" />
        <ellipse cx="14" cy="139" rx="12" ry="4" />
        <path d="M14 126 L18 131 H16 V148 H12 V131 H10 Z" fill="#404040" />
        <path d="M4 168 H10 V174 H4 Z M12 168 H18 V174 H12 Z M20 168 H26 V174 H20 Z M4 177 H20 V190 H4 Z" />
        <path d="M9 180 L16 184 L9 188 Z" fill="#242424" />
        <circle cx="25" cy="204" r="3.500" fill="#2b2b2b" />
        <path d="M23 204 H27" stroke="#555" />
      </svg>
    </div>
  );
}

function CommandLine() {
  return (
    <div className="absolute bottom-px left-[83px] right-[83px] flex h-[48px] border border-[#555]">
      <div className="flex w-[22px] shrink-0 flex-col items-center justify-between bg-gradient-to-r from-[#6a6a6a] to-[#333]/90 py-[3px] text-[#ccc]">
        <span className="h-[6px] w-[17px] border-y-2 border-dotted border-[#888]" />
        <button type="button" aria-label="关闭命令行"><X size={13} strokeWidth={3} /></button>
        <button type="button" aria-label="自定义"><Wrench size={11} strokeWidth={3} className="-scale-x-100" /></button>
      </div>
      <div className="flex min-w-0 flex-1 flex-col">
        <div className="flex h-[23px] items-center border-b border-[#555] bg-[#cbcbcb]/70 pl-[2px] pt-[4px] text-black">命令:</div>
        <div className="flex flex-1 items-center bg-white/70 pl-[5px]">
          <button type="button" aria-label="最近使用的命令" className="flex items-center gap-[3px]">
            <svg width="15" height="14" viewBox="0 0 15 14" fill="none" stroke="#444"><path d="M0.500 0.500 H14.500 V13.500 H0.500 Z" fill="#9aa0a8" stroke="#777" /><path d="M3 4 L6 7 L3 10 M7 10 H11" /></svg>
            <Caret className="text-[#555]" />
          </button>
          <input aria-label="命令" placeholder="键入命令" className="ml-[8px] min-w-0 flex-1 bg-transparent italic outline-none placeholder:text-[#6b6b6b]" />
          <Caret className="mr-[3px] rotate-180 text-black" />
        </div>
      </div>
    </div>
  );
}

const gridX = [795, 835, 875, 914, 954, 994, 1034, 1073, 1113, 1153, 1196];
const gridXLow = [795, 835, 877, 917, 957, 997, 1036, 1076, 1116, 1156, 1196];
const gridY = [361, 401, 441, 480, 520, 557, 593, 630, 669, 708, 749, 788];

type Lean = '/' | '\\';
type Half = 'both' | 'top' | 'bottom';

// One bay of the bracing: a red diagonal with a rounded concrete outline on each side
function Bay({ col, row, lean, half = 'both', fill = 'none' }: { col: number; row: number; lean: Lean; half?: Half; fill?: string }) {
  const xs = row > 6 ? gridXLow : gridX;
  const [left, right] = lean === '/' ? [xs[col], xs[col + 1]] : [xs[col + 1], xs[col]];
  const s = lean === '/' ? 1 : -1;
  const top = gridY[row];
  const bottom = gridY[row + 1];
  const upper = `${left + 7 * s},${top + 3} ${right - 8 * s},${top + 3} ${right - 8 * s},${top + 4} ${left + 4 * s},${bottom - 8} ${left + 3 * s},${bottom - 8} ${left + 3 * s},${top + 7}`;
  const lower = `${right - 7 * s},${bottom - 3} ${left + 8 * s},${bottom - 3} ${left + 8 * s},${bottom - 4} ${right - 4 * s},${top + 8} ${right - 3 * s},${top + 8} ${right - 3 * s},${bottom - 7}`;
  const showUpper = half !== 'bottom';
  const showLower = half !== 'top';

  return (
    <g>
      {showUpper ? <polygon points={upper} stroke="#fff" fill={fill} /> : null}
      {showLower ? <polygon points={lower} stroke="#fff" fill={fill} /> : null}
      <path d={`M${left} ${bottom} L${right} ${top}`} stroke="#f00" />
      {showUpper ? <path d={`M${left} ${bottom} V${top} H${right}`} stroke="#f00" /> : null}
      {showLower ? <path d={`M${left} ${bottom} H${right} V${top}`} stroke="#f00" /> : null}
    </g>
  );
}

function CrossBay({ x0, y0, x1, y1 }: { x0: number; y0: number; x1: number; y1: number }) {
  const cx = (x0 + x1) / 2;
  const cy = (y0 + y1) / 2;

  return (
    <g>
      <path
        d={`M${x0 + 8} ${y0 + 3} H${x1 - 8} V${y0 + 6} L${cx + 5} ${cy - 6} H${cx - 5} L${x0 + 8} ${y0 + 6} Z
          M${x0 + 8} ${y1 - 3} H${x1 - 8} V${y1 - 6} L${cx + 5} ${cy + 6} H${cx - 5} L${x0 + 8} ${y1 - 6} Z
          M${x0 + 3} ${y0 + 7} H${x0 + 5} L${cx - 7} ${cy - 5} V${cy + 5} L${x0 + 5} ${y1 - 7} H${x0 + 3} Z
          M${x1 - 3} ${y0 + 7} H${x1 - 5} L${cx + 7} ${cy - 5} V${cy + 5} L${x1 - 5} ${y1 - 7} H${x1 - 3} Z`}
        fill="url(#dots)"
        stroke="#ddd"
      />
      <path d={`M${x0} ${y0} L${x1} ${y1} M${x0} ${y1} L${x1} ${y0} M${x0} ${y0} H${x1} V${y1} H${x0} Z`} stroke="#f00" />
    </g>
  );
}

function FoundationPit() {
  const bays: ReactNode[] = [];

  for (let step = 0; step < 4; step += 1) {
    const fullCols = step === 0 ? 5 : 4 - step;
    for (let col = 0; col < fullCols; col += 1) {
      const fill = step === 0 && col === 4 ? 'url(#slash)' : 'none';
      bays.push(<Bay key={`tl${step}${col}`} col={col} row={step} lean="/" fill={fill} />);
      bays.push(<Bay key={`tr${step}${col}`} col={9 - col} row={step} lean={'\\'} fill={fill} />);
    }
    if (step > 0) {
      bays.push(<Bay key={`htl${step}`} col={fullCols} row={step} lean="/" half="top" />);
      bays.push(<Bay key={`htr${step}`} col={9 - fullCols} row={step} lean={'\\'} half="top" />);
    }
    const lowCols = step === 0 ? 3 : 4 - step;
    for (let col = 0; col < lowCols; col += 1) {
      bays.push(<Bay key={`bl${step}${col}`} col={col} row={10 - step} lean={'\\'} />);
      bays.push(<Bay key={`br${step}${col}`} col={9 - col} row={10 - step} lean="/" />);
    }
    if (step > 0) {
      bays.push(<Bay key={`hbl${step}`} col={lowCols} row={10 - step} lean={'\\'} half="bottom" />);
      bays.push(<Bay key={`hbr${step}`} col={9 - lowCols} row={10 - step} lean="/" half="bottom" />);
    }
  }
  bays.push(<Bay key="br6" col={6} row={10} lean="/" />);

  return (
    <g>
      {bays}
      {[4, 5, 6].map((row) => <CrossBay key={row} x0={795} y0={gridY[row]} x1={835} y1={gridY[row + 1]} />)}
      {[3, 4, 5].map((col) => <CrossBay key={col} x0={gridXLow[col]} y0={749} x1={gridXLow[col + 1]} y1={788} />)}
      <path d="M1153 520 V630 M1196 520 V630 M1153 520 H1196 M1153 630 H1196 M1153 520 L1196 564 M1155 576 L1196 564 M1155 576 L1196 589 M1153 630 L1196 589" stroke="#f00" />
      <path d="M1161 523 H1190 L1194 527 V557 L1161 524 M1156 528 L1189 562 L1157 572 Z M1162 576 L1192 567 V585 Z M1157 580 L1188 590 L1156 622 Z M1161 627 L1194 594 V624 L1191 627 Z" stroke="#fff" />
      <rect x="794" y="749" width="123" height="41" fill="url(#brick)" stroke="#fff" />
      <rect x="1037" y="749" width="162" height="41" fill="url(#brick)" stroke="#fff" />
      <polygon points="957,402 1031,402 1152,524 1152,630 1036,746 957,746 838,628 838,524" stroke="#fff" />
      <path d="M793 359 H1194 L1199 463 V790 H793 Z" stroke="#fff" />
      <path d="M795 361 H1191 L1196 443 V788 H795 Z" stroke="#f00" />
      <path d="M803 369 H1184 M803 781 H1189" stroke="#7fdfff" strokeWidth="2" />
      <path d="M803 369 V781 M1184 369 L1189 443 V781" stroke="#7fdfff" strokeDasharray="14 3" />
    </g>
  );
}

function Hedge({ x, y, width, height }: { x: number; y: number; width: number; height: number }) {
  return <rect x={x} y={y} width={width} height={height} fill="url(#shrub)" stroke="#10c060" />;
}

function Dormitory({ top }: { top: number }) {
  return (
    <g>
      <path d={`M1235 ${top - 5} H1257 V${top - 1} H1235 Z M1235 ${top + 101} H1257 V${top + 105} H1235 Z`} fill="#f00" stroke="#f00" />
      <rect x="1235" y={top} width="30" height="100" stroke="#0ff" strokeWidth="3" />
      <path d={`M1241 ${top + 2} V${top + 99}`} stroke="#fff" />
      {[12, 25, 37, 50, 62, 75, 87].map((offset) => (
        <path key={offset} d={`M1241 ${top + offset} H1263`} stroke="#fff" />
      ))}
    </g>
  );
}

function OfficeStrip() {
  return (
    <g>
      <path d="M1262 360 L1269 418 L1279 428 L1283 460 V498 H1296 V578 L1280 592 V655 L1295 658 L1298 706 L1304 710 V770 L1294 806 M1296 544 H1307 V564 M1296 548 H1306 M1296 562 H1309 V567 H1296" stroke="#444" strokeDasharray="4 1" />
      <path d="M1209 398 V806" stroke="#10c060" />
      <path d="M1261 425 H1277 V498 H1293 M1293 578 H1277 V660 H1293 V806 H1227 M1197 356 H1209" stroke="#f00" strokeDasharray="14 2 4 2" />
      <path d="M1209 356 H1261 V425 H1235 V399 H1209 Z" stroke="#ff0" strokeWidth="3" />
      <path d="M1235 358 V398" stroke="#fff" />
      <rect x="1219" y="398" width="17" height="5" fill="#f00" />
      <rect x="1215" y="404" width="20" height="13" fill="url(#shrub)" stroke="#10c060" strokeWidth="2" />
      <Hedge x={1228} y={437} width={7} height={46} />
      <Hedge x={1228} y={490} width={7} height={46} />
      <Hedge x={1228} y={553} width={7} height={47} />
      <Hedge x={1228} y={606} width={7} height={48} />
      <Dormitory top={436} />
      <Dormitory top={553} />
      <path d="M1229 432 H1235 V436 H1229 Z M1229 654 H1235 V658 H1229 Z" stroke="#f0f" strokeWidth="2" />
      <path d="M1270 436 H1277 V451 H1270 Z M1272 439 H1275 V449 H1272 Z M1270 625 H1277 V641 H1270 Z M1272 628 H1275 V639 H1272 Z" stroke="#0f0" />
      <path d="M1270 452 V492 H1275 M1270 624 V585 H1275" stroke="#777" />
      <path d="M1274 453 H1276 V491 H1274 Z M1274 585 H1276 V624 H1274 Z" stroke="#0ff" />
      <path d="M1274 492 H1278 V499 H1274 Z M1274 578 H1278 V585 H1274 Z" fill="#f0f" />
      <rect x="1272" y="501" width="21" height="70" stroke="#b2b24d" strokeWidth="3" />
      <path d="M1273 572 H1293 V576 H1273 Z" stroke="#f00" />
      <rect x="1275" y="572" width="14" height="5" fill="#f00" />
      <path d="M1231 664 H1289 V802 H1231 V768 H1257 V745 H1247 V720 H1257 V697 H1231 Z" stroke="#0080ff" strokeWidth="3" />
      <path d="M1233 689 H1288 M1264 689 V800 M1264 701 H1288 M1264 714 H1288 M1264 726 H1288 M1264 739 H1288 M1264 752 H1288 M1264 764 H1288 M1264 777 H1288 M1264 789 H1288 M1264 726 L1288 739 M1264 739 L1288 726 M1233 777 H1256 V800 M1243 777 V800" stroke="#fff" />
      <path d="M1231 698 V720 H1256 M1231 768 V745 H1247" stroke="#10c060" />
      <Hedge x={1234} y={699} width={20} height={19} />
      <Hedge x={1234} y={748} width={20} height={18} />
      <rect x="1231" y="728" width="3" height="9" stroke="#f00" />
      <path d="M1209 665 H1228 M1209 806 H1233" stroke="#fff" />
      <path d="M1207 663 H1211 V667 H1207 Z M1226 663 H1230 V667 H1226 Z M1207 803 H1212 V809 H1207 Z M1231 803 H1236 V809 H1231 Z" fill="#f0f" />
    </g>
  );
}

function TowerCrane() {
  return (
    <g>
      <circle cx="967.500" cy="585" r="251" stroke="#f00" />
      <path d="M975 575 L1145 405 M978 579 L1147 408 M960 597 L942 616 M963 600 L945 618 M938 608 L945 614 L934 626 L926 619 Z M967 568 L952 584" stroke="#f00" />
      <path d="M976 577 L1146 406" stroke="#0f0" strokeDasharray="3 3" />
      <text x="1051" y="507" transform="rotate(-48 1051 507)" fontSize="8" fontWeight="700" fill="#fff">70.0m</text>
      <rect x="958" y="575" width="19" height="19" stroke="#fff" />
      <path d="M963 577 H972 L975 580 V589 L972 592 H963 L960 589 V580 Z" fill="#f00" />
      <path d="M958 575 V594 M967 571 V576 M967 593 V599 M967 583 V587" stroke="#ff0" />
      <path d="M953 585 H962 M973 585 H982" stroke="#fff" />
    </g>
  );
}

function GateDetails() {
  return (
    <g>
      <path d="M770 580 H774 L781 588 L774 598 H770 Z" fill="#f0f" />
      <path d="M784 560 H790 V569 H784 Z" fill="#0ff" />
      <path d="M785 571 V606" stroke="#0f0" />
      <path d="M782 569 H787 V573 H782 Z M782 604 H787 V610 H782 Z" fill="#f0f" />
      <path d="M788 577 H810 V600 H788 Z M783 610 H790 V639 H783 Z M783 620 H790 M785 629 H788 V636 H785 Z" stroke="#888" strokeWidth="2" />
      <path d="M820 795 H914 V805 H820 Z M854 797 H862 V805 M865 797 H886 V804 H865 Z M891 797 H912 V804 H891 Z M863 795 V805 M888 795 V805" stroke="#fff" />
      <path d="M832 793 H851 V806 H830 Z" fill="#fff" />
      <path d="M836 798 H847 V803 H838 Z" fill="#ff0" />
      <path d="M838 795 V792 L842 795 V792" stroke="#0ff" />
      <path d="M821 799 H829 V802 H821 Z" fill="#fff" />
      <path d="M948 795 H982 V805 H948 Z M951 798 H963 V802 H951 Z M966 795 V805 M971 795 V805 M976 795 V805" stroke="#888" strokeWidth="2" />
      <path d="M958 807 V812 H986 V807" stroke="#fff" strokeWidth="2" />
      <path d="M961 811 V808 H966 V811 M977 811 V808 H982 V811" stroke="#0f0" strokeWidth="2" />
      <path d="M999 748 H1011 V802 H999 Z M999 782 H1011 M999 790 H1011" stroke="#888" strokeWidth="2" />
      <path d="M990 803 H1030" stroke="#0f0" />
      <path d="M1030 804 V794 H1064" stroke="#0f0" strokeWidth="3" />
      <path d="M985 802 H992 V806 H985 Z M1018 802 H1023 V806 H1018 Z M1058 794 H1063 V796 H1058 Z M1059 801 H1063 V805 H1059 Z" fill="#f0f" />
      <path d="M1034 797 H1042 V803 H1034 Z M1062 803 H1073 V806 H1062 Z" fill="#fff" />
      <path d="M1047 806 V810 H1063 V806 M1057 795 V806" stroke="#fff" />
      <path d="M1048 797 H1052 V805" stroke="#ff0" />
      <path d="M1074 806 V797 H1201 V806 M1100 797 V806 M1125 797 V806 M1150 797 V806 M1175 797 V806" stroke="#0f0" strokeWidth="3" />
      <path d="M1077 799 H1097 V805 H1077 Z M1102 799 H1122 V805 H1102 Z M1127 799 H1147 V805 H1127 Z M1152 799 H1172 V805 H1152 Z M1177 799 H1198 V805 H1177 Z" stroke="#888" />
      <path d="M996 819 V814 L1005 808 L1015 814 V819 Z M1212 817 L1221 811 L1231 817 Z M1212 819 H1231 V821 H1212 Z" fill="#f0f" />
    </g>
  );
}

function SitePlan() {
  return (
    <svg viewBox="102 150 1817 851" preserveAspectRatio="xMidYMid slice" className="absolute inset-0 h-full w-full" fill="none" shapeRendering="crispEdges">
      <defs>
        <pattern id="slash" width="4" height="4" patternUnits="userSpaceOnUse"><path d="M0 4 L4 0" stroke="#aaa" /></pattern>
        <pattern id="dots" width="4" height="4" patternUnits="userSpaceOnUse"><path d="M0 0 H4 V4 H0 Z" fill="#888" /><path d="M1 0 H2 V1 H1 Z M3 2 H4 V3 H3 Z M0 2 H1 V3 H0 Z" fill="#111" /></pattern>
        <pattern id="brick" width="10" height="10" patternUnits="userSpaceOnUse"><path d="M0 5 L5 0 L10 5 M0 10 L5 5 L10 10 M2 3 L7 8 M0 0 L2 3 M7 8 L10 10" stroke="#ff0" /></pattern>
        <pattern id="shrub" width="6" height="6" patternUnits="userSpaceOnUse"><path d="M1 2 H4 M2 0 V4 M5 5 H6" stroke="#10c060" /></pattern>
      </defs>

      <g stroke="#f00">
        <path d="M717 162 V263 L716 450 V640 L714 770 Q711 806 680 806 H593 M785 162 V280 L783 354" />
        <path d="M785 173 L818 177 L824 186 L836 188 L845 184 L880 173 L910 162" />
        <path d="M750 162 L749 500 L748 843 L754 935 L758 1001" strokeDasharray="100 12 26 12" strokeDashoffset="10" />
        <path d="M593 843 H1325" strokeDasharray="100 12 26 12" strokeDashoffset="8" />
        <path d="M593 881 H684 Q717 884 718 915 L725 1001 M792 1001 L786 923 Q786 884 820 881 H1297 L1307 1001 M1232 881 L1245 1001" />
      </g>
      <path d="M978 162 V170 L985 179 L1077 196 L1130 212 L1155 224 L1171 239 L1213 269 L1230 290 L1237 305 L1242 330 L1260 428 L1267 477 L1270 532 L1278 635 L1288 780 L1296 881" stroke="#00f" />

      <FoundationPit />

      <g stroke="#f00" strokeWidth="3">
        <path d="M995 411 V477 Q995 485 987 485 H911 M911 502 H987 Q995 502 995 511 V679 Q995 687 987 687 H944 M944 704 H978 Q986 704 986 713 V781" />
        <path d="M1016 411 V477 Q1016 485 1024 485 H1100 M1100 502 H1024 Q1016 502 1016 511 V679 Q1016 687 1024 687 H1067 M1067 704 H1032 Q1024 704 1024 713 V781" />
        <path d="M783 355 H1196 L1202 450 L1209 540 L1227 806 H818 Q783 803 782 760 Z" strokeDasharray="16 2 5 2 5 2" />
      </g>
      <path d="M995 411 H1016 M911 485 V503 M1100 485 V503 M944 687 V705 M1067 687 V705" stroke="#fff" />

      <rect x="1015" y="576" width="63" height="84" stroke="#0a8040" strokeWidth="3" />
      <path d="M1058 593 V643 M1073 593 V643 M1054 610 H1078 M1054 626 H1078" stroke="#0a8040" />
      <path d="M1054 593 H1078 V643 H1054 Z M1066 593 V643" stroke="#0f0" strokeWidth="2" />

      <TowerCrane />
      <GateDetails />
      <OfficeStrip />

      <path
        d="M958 208 L1030 227 L1007 322 L913 298 L932 220 L944 223 M958 208 L929 301 M952 219 L948 239 M965 218 L1022 232 L1007 289 L952 276 Z M970 229 L1013 240 L1006 266 L964 255 Z
          M1030 236 L1053 241 M1025 254 L1051 261 M1050 269 L1059 222 L1072 226 L1067 269 M1047 270 H1071 V324 L1046 323 Z
          M1074 269 L1079 224 L1086 226 L1088 211 L1121 214 L1130 213 L1149 219 L1142 290 M1128 290 H1145 L1143 338 H1127 Z M1007 322 L1071 331 L1118 338 H1143 M1074 269 L1071 331"
        stroke="#f0f"
        strokeWidth="3"
      />

      <path d="M123 979 V929 M123 979 H174 M119 974 H128 V984 H119 Z M125 912 L131 918 L138 912 M131 918 V925 M178 965 L190 977 M190 965 L178 977" stroke="#fff" />

      <g fill="#0caf92" shapeRendering="geometricPrecision">
        <path d="M827 281 L803 322 M1248 301 L1216 337 M1316 830 L1262 818" stroke="#0caf92" strokeWidth="10" strokeLinecap="round" />
        <path d="M786 344 L790 311 L815 328 Z M1197 354 L1207 322 L1228 342 Z M1234 812 L1266 804 L1260 832 Z" />
      </g>
      <g
        className="font-['Noto_Sans_CJK_SC',sans-serif]"
        fontSize="49"
        fontWeight="500"
        fill="#0caf92"
        stroke="#fff"
        strokeWidth="9"
        strokeLinejoin="round"
        paintOrder="stroke"
        shapeRendering="geometricPrecision"
      >
        <text x="819" y="260">1号点</text>
        <text x="1260" y="285">2号点</text>
        <text x="1324" y="854">3号点</text>
      </g>
    </svg>
  );
}

function LayoutTabs() {
  return (
    <div className="flex h-[17px] shrink-0 items-stretch border-b-2 border-white bg-[#f0f0f0] text-[12px] leading-[15px] text-black">
      <div className="flex divide-x divide-[#aaa] border-r border-[#aaa]">
        {['M3 2 V10 M10 2 L5 6 L10 10 Z', 'M9 2 L4 6 L9 10 Z', 'M4 2 L9 6 L4 10 Z', 'M3 2 L8 6 L3 10 Z M10 2 V10'].map((d) => (
          <button key={d} type="button" aria-label="切换布局" className="w-[14px]">
            <svg width="13" height="12" viewBox="0 0 13 12" fill="#555" stroke="#555"><path d={d} /></svg>
          </button>
        ))}
      </div>
      <button type="button" className="bg-black px-[10px] text-white [clip-path:polygon(0_0,100%_0,88%_100%,12%_100%)]">模型</button>
      <button type="button" className="pl-[5px]">布局1</button>
      <svg width="8" height="15" viewBox="0 0 8 15" stroke="#333"><path d="M7 0 L1 15" /></svg>
    </div>
  );
}

const draftingToggles: Array<{ label: string; isOn: boolean; d: string; accent?: string; color?: string }> = [
  { label: '推断约束', isOn: false, d: 'M6 1 V10 M1 5 H11 M4 3 H8 V7 H4 Z', accent: 'M9 10 H11 V15 H9 Z M13 9 V12 H15 V9 Z', color: '#2f7fc1' },
  { label: '捕捉模式', isOn: false, d: 'M2 3 H3 M6 3 H7 M10 3 H11 M2 7 H3 M6 7 H7 M10 7 H11 M2 11 H3 M6 11 H7 M13 2 V13 M2 14 H12' },
  { label: '栅格显示', isOn: false, d: 'M1 1 H15 V15 H1 Z M4 1 V15 M8 1 V15 M12 1 V15 M1 4 H15 M1 8 H15 M1 12 H15' },
  { label: '正交模式', isOn: false, d: 'M2 1 V14 H15 M2 9 H7 V14' },
  { label: '极轴追踪', isOn: true, d: 'M13 3 A6 6 0 1 0 13 12 M7 8 L14 1 M7 8 H14 M12 4 V12' },
  { label: '对象捕捉', isOn: true, d: 'M4 3 H15 V15 H4 Z', accent: 'M1 1 H5 V5 H1 Z', color: '#e0641c' },
  { label: '三维对象捕捉', isOn: false, d: 'M3 4 L6 1 H14 V10 L11 13 H3 Z', accent: 'M1 11 H5 V15 H1 Z', color: '#e0641c' },
  { label: '对象捕捉追踪', isOn: true, d: 'M13 2 L2 13 H14' },
  { label: '动态 UCS', isOn: true, d: 'M2 2 V13 H14 M2 13 L9 6', accent: 'M13 1 L10 5 H13 L10 9', color: '#f08a1c' },
  { label: '动态输入', isOn: true, d: 'M5 2 V12 M1 7 H9 M8 9 H14 V13 H8 Z' },
  { label: '线宽', isOn: true, d: 'M7 2 H9 V14 H7 Z M2 7 H14 V9 H2 Z' },
  { label: '透明度', isOn: true, d: '', accent: 'M1 1 H15 V15 H1 Z M1 5 L5 1 M1 9 L9 1 M1 13 L13 1 M3 15 L15 3 M7 15 L15 7 M11 15 L15 11 M1 11 L5 15 M1 7 L9 15 M1 3 L13 15 M3 1 L15 13 M7 1 L15 9', color: '#4a90cf' },
  { label: '快捷特性', isOn: false, d: 'M4 2 H12 V14 H4 Z M6 5 H10 M6 8 H10 M6 11 H10' },
  { label: '选择循环', isOn: false, d: 'M4 0 V8 M0 4 H8 M6 5 H12 V8', accent: 'M8 8 H14 V15 H8 Z', color: '#3f8f2f' },
  { label: '注释监视器', isOn: false, d: 'M5 1 H11 V5 H15 V11 H11 V15 H5 V11 H1 V5 H5 Z' },
];

const statusButton = 'flex h-full items-center justify-center border-r border-[#444] bg-gradient-to-b from-[#c8c8c8] to-[#9a9a9a] whitespace-nowrap';

function StatusBar() {
  return (
    <footer className="flex h-[20px] shrink-0 items-center border-t border-black bg-gradient-to-b from-[#787878] to-[#989898] text-black">
      <button type="button" className="ml-[4px] flex h-full w-[81px] items-center border-l border-[#444] bg-gradient-to-b from-[#b8b8b8] to-[#9a9a9a] pl-px pt-[2px]">
        比例<span className="ml-[6px] font-['DejaVu_Sans_Mono',monospace] text-[10px]">1:500</span>
        <Caret className="ml-[6px]" />
      </button>
      <span className="w-[240px] whitespace-pre pl-[8px] pt-[4px] font-['DejaVu_Sans_Mono',monospace] text-[10px]">5.0650E+08, 3.0969E+09, 0.0000</span>
      <div className="flex h-full border-l border-[#444]">
        {draftingToggles.map((toggle) => (
          <button
            key={toggle.label}
            type="button"
            aria-label={toggle.label}
            aria-pressed={toggle.isOn}
            className={`flex h-full w-[22px] items-center justify-center border-r border-[#444] ${
              toggle.isOn ? 'bg-gradient-to-b from-[#e6f6fb] to-[#8cc9dd]' : 'bg-gradient-to-b from-[#c8c8c8] to-[#9a9a9a]'
            }`}
          >
            <Glyph>
              <path d={toggle.d} stroke="#222" />
              {toggle.accent ? <path d={toggle.accent} stroke={toggle.color} /> : null}
            </Glyph>
          </button>
        ))}
      </div>
      <div className="ml-auto flex h-full items-center border-l border-[#444]">
        <button type="button" className={`${statusButton} w-[30px] pt-[2px]`}>模型</button>
        <button type="button" aria-label="快速查看布局" className={`${statusButton} w-[22px]`}><Glyph><path d="M2 1 H13 V12 H2 Z M5 4 V9 H10 Z M1 14 H14" fill="#eee" /></Glyph></button>
        <button type="button" aria-label="快速查看图形" className={`${statusButton} w-[22px]`}><Glyph><path d="M1 2 H7 V9 H1 Z M8 2 H15 V9 H8 Z M2 13 H14" fill="#eee" /></Glyph></button>
        <button type="button" className={`${statusButton} ml-[18px] w-[54px] gap-[3px] border-l`}>
          <AnnotationIcon />
          <span className="pt-[2px] font-['DejaVu_Sans_Mono',monospace] text-[10px]">1:1</span>
          <Caret />
        </button>
        <button type="button" aria-label="注释可见性" className={`${statusButton} w-[22px]`}><AnnotationIcon accent="#f59a23" /></button>
        <button type="button" aria-label="自动添加比例" className={`${statusButton} w-[22px] opacity-70`}><AnnotationIcon /></button>
        <button type="button" aria-label="切换工作空间" className={`${statusButton} ml-[6px] w-[22px] border-l`}><Settings size={16} strokeWidth={1.8} /></button>
        <button type="button" aria-label="锁定" className={`${statusButton} w-[22px]`}><Glyph><path d="M1 7 H10 V15 H1 Z M8 7 V4 Q8 1 11 1 Q14 1 14 4 V7" fill="#e0e0e0" /><path d="M5 10 V13" strokeWidth="2" /></Glyph></button>
        <button type="button" aria-label="硬件加速" className={`${statusButton} w-[22px]`}><Glyph><circle cx="8" cy="8" r="6" fill="#777" stroke="#888" /><path d="M8 8 L5 4" stroke="#ddd" /></Glyph></button>
        <button type="button" className="flex h-full w-[30px] items-center justify-center border-r border-[#444] bg-gradient-to-b from-[#e6f6fb] to-[#8cc9dd] pt-[2px]">编组</button>
        <button type="button" className={`${statusButton} w-[30px] pt-[2px]`}>基线</button>
        <button type="button" className={`${statusButton} w-[30px] pt-[2px]`}>填充</button>
        <button type="button" className={`${statusButton} w-[30px] pt-[2px]`}>加粗</button>
        <button type="button" className={`${statusButton} w-[54px] pt-[2px]`}>动态标注</button>
        <div className="flex h-full w-[46px] items-center justify-center gap-[6px] border border-[#555]">
          <Glyph><path d="M1 2 H7 L12 5 V10 H1 Z" fill="#3f78b5" /><path d="M2 9 H10 V14 H2 Z" fill="#f0cf4a" stroke="#b08b1e" /><path d="M8 11 L11 15 L15 9" stroke="#1fa01f" strokeWidth="2" /></Glyph>
          <Glyph><circle cx="8" cy="6" r="5" fill="#fbe9a0" stroke="#c89a2a" /><path d="M6 11 H10 V14 H6 Z" fill="#888" /></Glyph>
        </div>
        <button type="button" aria-label="状态栏菜单" className={`${statusButton} ml-[6px] w-[11px] border-l`}><Caret /></button>
        <button type="button" aria-label="全屏显示" className="mx-[4px]"><Glyph><path d="M1 1 H15 V15 H1 Z" fill="#f4f4f4" /><path d="M1 1 H15 V4 H1 Z" fill="#667" /></Glyph></button>
      </div>
    </footer>
  );
}

function AnnotationIcon({ accent }: { accent?: string }) {
  return (
    <Glyph>
      <path d="M8 1 L10 8 L15 13 L8 10 L1 13 L6 8 Z" fill="#e8e8e8" />
      {accent ? <circle cx="12" cy="10" r="3" fill={accent} stroke={accent} /> : null}
    </Glyph>
  );
}
